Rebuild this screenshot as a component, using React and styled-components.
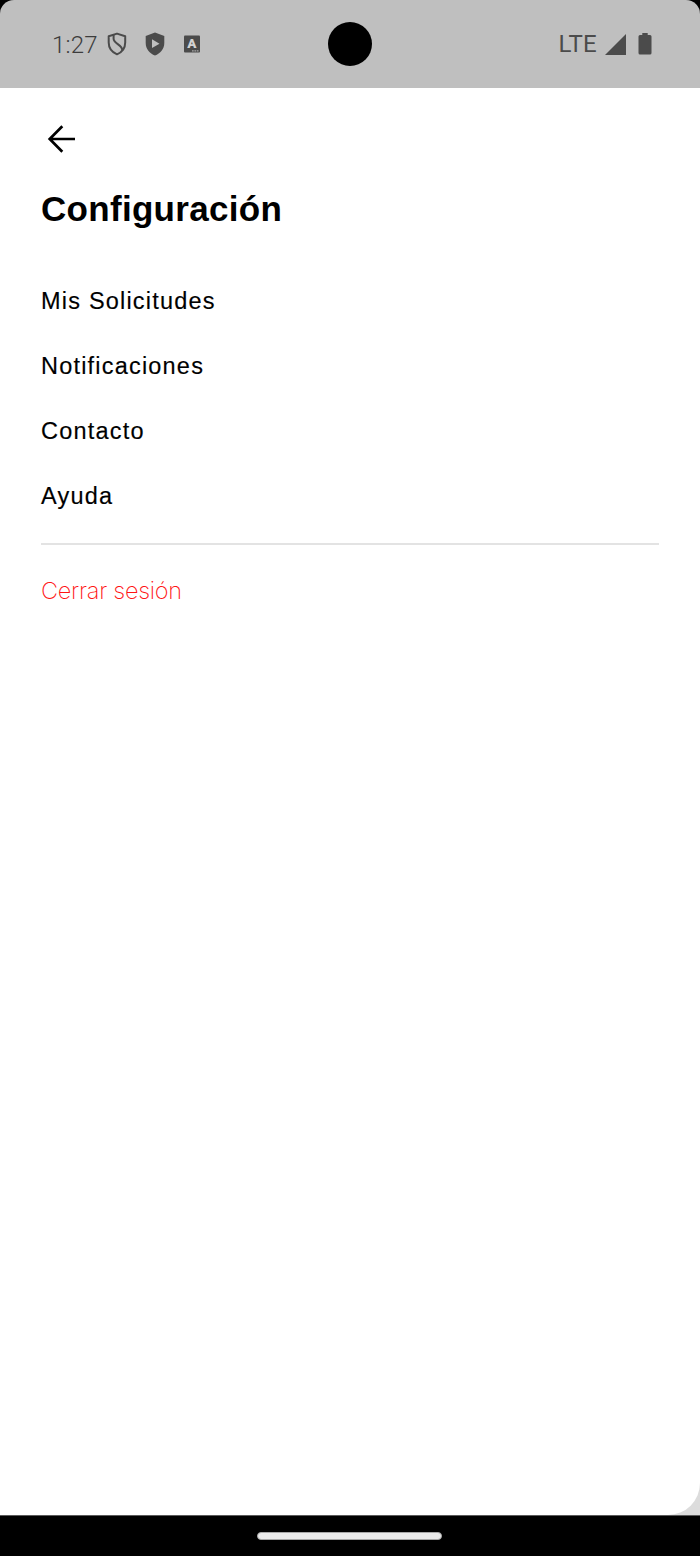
import React from 'react';
import styled, { createGlobalStyle } from "styled-components";

const GlobalStyle = createGlobalStyle`
    body {
        margin: 0;
        background-color: #000000;
    }

    * {
        box-sizing: border-box;
    }
`

const Phone = styled.div`
    width: 700px;
    height: 1556px;
    display: flex;
    flex-direction: column;
    background-color: #000000;
    overflow: hidden;
`

const StatusBar = styled.header`
    position: relative;
    flex: none;
    height: 88px;
    padding: 0 48px 0 52px;
    display: flex;
    align-items: center;
    justify-content: space-between;
    background-color: #bfbfbf;
    border-radius: 14px 14px 0 0;
    color: #4b4b4b;
`

const StatusGroup = styled.div`
    display: flex;
    align-items: center;
    gap: ${props => props.$gap}px;
`

const Clock = styled.span`
    width: 46px;
    padding-top: 1px;
    font-family: "Roboto", sans-serif;
    font-size: 24px;
    font-weight: 300;
    line-height: 28px;
    letter-spacing: 0.2px;
    white-space: nowrap;
    color: #3c3c3c;
`

const Network = styled.span`
    font-family: "Roboto", sans-serif;
    font-size: 24px;
    font-weight: 400;
    line-height: 28px;
    letter-spacing: 0.3px;
`

const NoticeIcons = styled.div`
    display: flex;
    align-items: center;
    gap: 18px;
    margin-left: 8.5px;
`

const Camera = styled.div`
    position: absolute;
    top: 22px;
    left: 328px;
    width: 44px;
    height: 44px;
    border-radius: 50%;
    background-color: #000000;
`

const ScreenEdge = styled.div`
    flex: 1;
    display: flex;
    background-color: #dcdcdc;
    border-bottom: 1px solid #5a5a5a;
`

const Screen = styled.main`
    flex: 1;
    padding: 36px 41px 0;
    background-color: #ffffff;
    border-radius: 0 0 32px 0;
    font-family: "Liberation Sans", Arial, sans-serif;
`

const BackButton = styled.button`
    display: flex;
    margin: 0 0 0 5px;
    padding: 0;
    border: none;
    background: none;
    color: #000000;
`

const Title = styled.h1`
    margin: 34px 0 0;
    font-size: 35px;
    font-weight: bold;
    line-height: 42px;
    letter-spacing: 0.3px;
    color: #000000;
`

const Menu = styled.nav`
    display: flex;
    flex-direction: column;
    margin-top: 39px;
    padding-bottom: 14px;
    border-bottom: 2px solid #e3e3e3;
`

const MenuItem = styled.a`
    height: 65px;
    line-height: 65px;
    font-size: 23.5px;
    letter-spacing: 1.2px;
    color: #000000;
    -webkit-text-stroke: 0.15px #000000;
`

const Logout = styled.a`
    display: block;
    margin-top: 31px;
    font-family: "Inter", sans-serif;
    font-size: 23.5px;
    font-weight: 250;
    line-height: 30px;
    letter-spacing: -0.25px;
    color: #ff1414;
`

const NavBar = styled.footer`
    flex: none;
    height: 40px;
    padding: 16px 1px 0 0;
    display: flex;
    justify-content: center;
    background-color: #000000;
`

const HomeHandle = styled.div`
    width: 185px;
    height: 8px;
    border-radius: 4px;
    background-color: #ebebeb;
    border: 1px solid #a8a8a8;
`

const items = ["Mis Solicitudes", "Notificaciones", "Contacto", "Ayuda"];

function ShieldOutline () {
    return (
        <svg width="20" height="24" viewBox="0 0 20 24" fill="none" stroke="currentColor" strokeWidth="2">
            <path d="M10 1.6 L18.2 4.2 V10.5 C18.2 16 15 20.2 10 22.3 C5 20.2 1.7 16 1.7 10.5 V4.2 Z" strokeLinejoin="round" />
            <path d="M6.6 2.8 V6.8 C6.6 12 15.5 12.5 15.3 18.5" />
        </svg>
    )
}

function ShieldPlay () {
    return (
        <svg width="20" height="24" viewBox="0 0 20 24">
            <path fill="currentColor" fillRule="evenodd" d="M10 0.5 L19.3 4 V11 C19.3 17 15.3 21.6 10 23.5 C4.7 21.6 0.7 17 0.7 11 V4 Z M7 7.3 V16 L14.5 11.7 Z" />
        </svg>
    )
}

function LetterBadge () {
    return (
        <svg width="18" height="18" viewBox="0 0 18 18">
            <rect x="1" y="0.5" width="16" height="17" rx="1" fill="currentColor" />
            <text x="8.9" y="13.4" textAnchor="middle" fontFamily="Roboto, sans-serif" fontSize="13.5" fontWeight="900" fill="#d2d2d2">A</text>
            <path d="M9 15.9 H16" stroke="#a8a8a8" strokeWidth="1.1" strokeDasharray="1.7 0.7" />
        </svg>
    )
}

function Signal () {
    return (
        <svg width="21" height="21" viewBox="0 0 21 21">
            <path d="M0 21 L21 0 V21 Z" fill="currentColor" />
        </svg>
    )
}

function Battery () {
    return (
        <svg width="14" height="22" viewBox="0 0 14 22">
            <path d="M4.3 0 H9.7 V2 H12 Q13.5 2 13.5 3.5 V20 Q13.5 21.5 12 21.5 H2 Q0.5 21.5 0.5 20 V3.5 Q0.5 2 2 2 H4.3 Z" fill="currentColor" />
        </svg>
    )
}

function ArrowLeft () {
    return (
        <svg width="30" height="30" viewBox="0 0 30 30" fill="none" stroke="currentColor" strokeWidth="2.7">
            <path d="M16.3 2.3 L3.7 15 L16.3 27.7 M3.5 15 H29" />
        </svg>
    )
}

export default function App () {return (
    <Phone>
        <GlobalStyle />
        <StatusBar>
            <StatusGroup $gap={0}>
                <Clock>1:27</Clock>
                <NoticeIcons>
                    <ShieldOutline />
                    <ShieldPlay />
                    <LetterBadge />
                </NoticeIcons>
            </StatusGroup>
            <Camera />
            <StatusGroup $gap={12}>
                <StatusGroup $gap={8}>
                    <Network>LTE</Network>
                    <Signal />
                </StatusGroup>
                <Battery />
            </StatusGroup>
        </StatusBar>
        <ScreenEdge>
            <Screen>
                <BackButton aria-label="Volver"><ArrowLeft /></BackButton>
                <Title>Configuración</Title>
                <Menu>
                    {items.map(item => <MenuItem key={item}>{item}</MenuItem>)}
                </Menu>
                <Logout>Cerrar sesión</Logout>
            </Screen>
        </ScreenEdge>
        <NavBar>
            <HomeHandle />
        </NavBar>
    </Phone>
)};
